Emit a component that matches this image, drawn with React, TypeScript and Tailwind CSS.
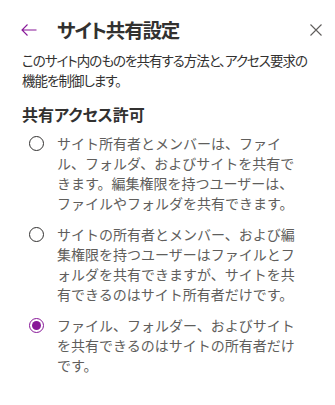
import { useState } from 'react';

const options = [
  {
    id: 'members',
    lines: ['サイト所有者とメンバーは、ファイ', 'ル、フォルダ、およびサイトを共有で', 'きます。編集権限を持つユーザーは、', 'ファイルやフォルダを共有できます。'],
  },
  {
    id: 'editors',
    lines: ['サイトの所有者とメンバー、および編', '集権限を持つユーザーはファイルとフ', 'ォルダを共有できますが、サイトを共', '有できるのはサイト所有者だけです。'],
  },
  {
    id: 'owners',
    lines: ['ファイル、フォルダー、およびサイト', 'を共有できるのはサイトの所有者だけ', 'です。'],
  },
];

export default function App() {
  const [selected, setSelected] = useState('owners');

  return (
    <div
      className="w-[335px] h-[405px] bg-white text-[#323130] overflow-hidden"
      style={{ fontFamily: '"Noto Sans CJK JP", "Noto Sans", sans-serif' }}
    >
      {/* Header */}
      <div className="flex items-center h-[28px] mt-[16px] pl-[21px] pr-[12px]">
        <button className="w-[17px] h-[28px] flex items-center text-[#881798]">
          <svg width="16" height="12" viewBox="0 0 16 12" fill="none" stroke="currentColor" strokeWidth="1.1">
            <path d="M15.5 6H1M6.5 0.5L1 6l5.5 5.5" />
          </svg>
        </button>
        <h1 className="ml-[19px] text-[19.5px] leading-[28px] font-semibold tracking-[-1.2px] [font-feature-settings:'palt']">
          サイト共有設定
        </h1>
        <button className="ml-auto w-[14px] h-[14px] flex items-center justify-center text-[#605e5c]">
          <svg width="12" height="12" viewBox="0 0 12 12" fill="none" stroke="currentColor" strokeWidth="1.1">
            <path d="M0.5 0.5l11 11M11.5 0.5l-11 11" />
          </svg>
        </button>
      </div>

      {/* Description */}
      <p className="mt-[6px] px-[22px] text-[13.5px] leading-[20px] tracking-[-1px] [font-feature-settings:'palt']">
        <span className="block whitespace-nowrap">このサイト内のものを共有する方法と、アクセス要求の</span>
        <span className="block whitespace-nowrap">機能を制御します。</span>
      </p>

      {/* Section */}
      <h2 className="mt-[12px] px-[22px] text-[16px] leading-[24px] font-semibold [font-feature-settings:'palt']">
        共有アクセス許可
      </h2>

      <div className="mt-[7px] pl-[29px] flex flex-col gap-[11px]">
        {options.map((opt) => {
          const on = selected === opt.id;
          return (
            <label key={opt.id} className="flex items-start cursor-pointer" onClick={() => setSelected(opt.id)}>
              <span className="h-[20px] flex items-center">
                <span
                  className={
                    'w-[15px] h-[15px] rounded-full border flex items-center justify-center ' +
                    (on ? 'border-[#881798]' : 'border-[#323130]')
                  }
                >
                  {on && <span className="w-[9px] h-[9px] rounded-full bg-[#881798]" />}
                </span>
              </span>
              <span className="ml-[13px] text-[14px] leading-[20px] text-[#605e5c]">
                {opt.lines.map((l) => (
                  <span key={l} className="block whitespace-nowrap">
                    {l}
                  </span>
                ))}
              </span>
            </label>
          );
        })}
      </div>
    </div>
  );
}
